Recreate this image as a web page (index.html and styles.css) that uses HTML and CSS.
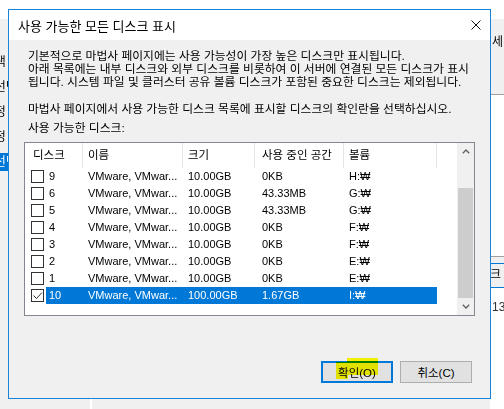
FILE: index.html
```html
<!DOCTYPE html>
<html lang="ko">
<head>
<meta charset="utf-8">
<title>사용 가능한 모든 디스크 표시</title>
<link rel="stylesheet" href="styles.css">
</head>
<body>
<div class="desktop">
  <div class="bg-window">
    <div class="bg-header"></div>
    <div class="bg-main">
      <nav class="bg-nav">
        <div class="nav-item">백업 구성 선택</div>
        <div class="nav-item">백업할 항목 선택</div>
        <div class="nav-item">백업 시간 지정</div>
        <div class="nav-item">대상 유형 지정</div>
        <div class="nav-item nav-item-active">대상 디스크 선택</div>
      </nav>
      <div class="bg-content">
        <div class="bg-side">
          <div class="bg-side-top">세 고</div>
          <div class="bg-side-list"></div>
          <div class="bg-side-row">크</div>
          <div class="bg-side-count">13</div>
        </div>
      </div>
    </div>
  </div>

  <div class="dialog">
    <div class="titlebar">
      <span class="title">사용 가능한 모든 디스크 표시</span>
      <svg class="close" width="10" height="10" viewBox="0 0 10 10"><path d="M0.5 0.5 L9.5 9.5 M9.5 0.5 L0.5 9.5" stroke="#111" stroke-width="1" fill="none"/></svg>
    </div>
    <div class="dlg-body">
      <p class="desc">기본적으로 마법사 페이지에는 사용 가능성이 가장 높은 디스크만 표시됩니다.<br>아래 목록에는 내부 디스크와 외부 디스크를 비롯하여 이 서버에 연결된 모든 디스크가 표시<br>됩니다. 시스템 파일 및 클러스터 공유 볼륨 디스크가 포함된 중요한 디스크는 제외됩니다.</p>
      <p class="instr">마법사 페이지에서 사용 가능한 디스크 목록에 표시할 디스크의 확인란을 선택하십시오.</p>
      <p class="label">사용 가능한 디스크:</p>
      <div class="listbox">
        <div class="list-main">
          <div class="lv-header">
            <div class="hcol h-disk">디스크</div>
            <div class="hcol h-name">이름</div>
            <div class="hcol h-size">크기</div>
            <div class="hcol h-used">사용 중인 공간</div>
            <div class="hcol h-vol">볼륨</div>
            <div class="h-fill"></div>
          </div>
          <div class="lv-row">
            <span class="cb"></span>
            <div class="sel"><span class="c-num">9</span><span class="c-name">VMware, VMwar...</span><span class="c-size">10.00GB</span><span class="c-used">0KB</span><span class="c-vol">H:₩</span></div>
          </div>
          <div class="lv-row">
            <span class="cb"></span>
            <div class="sel"><span class="c-num">6</span><span class="c-name">VMware, VMwar...</span><span class="c-size">10.00GB</span><span class="c-used">43.33MB</span><span class="c-vol">G:₩</span></div>
          </div>
          <div class="lv-row">
            <span class="cb"></span>
            <div class="sel"><span class="c-num">5</span><span class="c-name">VMware, VMwar...</span><span class="c-size">10.00GB</span><span class="c-used">43.33MB</span><span class="c-vol">G:₩</span></div>
          </div>
          <div class="lv-row">
            <span class="cb"></span>
            <div class="sel"><span class="c-num">4</span><span class="c-name">VMware, VMwar...</span><span class="c-size">10.00GB</span><span class="c-used">0KB</span><span class="c-vol">F:₩</span></div>
          </div>
          <div class="lv-row">
            <span class="cb"></span>
            <div class="sel"><span class="c-num">3</span><span class="c-name">VMware, VMwar...</span><span class="c-size">10.00GB</span><span class="c-used">0KB</span><span class="c-vol">F:₩</span></div>
          </div>
          <div class="lv-row">
            <span class="cb"></span>
            <div class="sel"><span class="c-num">2</span><span class="c-name">VMware, VMwar...</span><span class="c-size">10.00GB</span><span class="c-used">0KB</span><span class="c-vol">E:₩</span></div>
          </div>
          <div class="lv-row">
            <span class="cb"></span>
            <div class="sel"><span class="c-num">1</span><span class="c-name">VMware, VMwar...</span><span class="c-size">10.00GB</span><span class="c-used">0KB</span><span class="c-vol">E:₩</span></div>
          </div>
          <div class="lv-row lv-row-selected">
            <span class="cb cb-checked"><svg width="11" height="11" viewBox="0 0 11 11"><polyline points="1.5,5.5 4.5,8.5 10,2.5" fill="none" stroke="#333" stroke-width="1"/></svg></span>
            <div class="sel"><span class="c-num">10</span><span class="c-name">VMware, VMwar...</span><span class="c-size">100.00GB</span><span class="c-used">1.67GB</span><span class="c-vol">I:₩</span></div>
          </div>
        </div>
        <div class="scrollbar">
          <div class="sb-btn"><svg width="8" height="5" viewBox="0 0 8 5"><polyline points="0.8,4.3 4,1 7.2,4.3" fill="none" stroke="#606060" stroke-width="1.3"/></svg></div>
          <div class="sb-track"><div class="sb-thumb"></div></div>
          <div class="sb-btn"><svg width="8" height="5" viewBox="0 0 8 5"><polyline points="0.8,0.7 4,4 7.2,0.7" fill="none" stroke="#606060" stroke-width="1.3"/></svg></div>
        </div>
      </div>
      <div class="buttons">
        <button class="btn btn-default"><span class="btn-label">확인(O)</span><span class="hl hl-a"></span><span class="hl hl-b"></span></button>
        <button class="btn"><span class="btn-label">취소(C)</span></button>
      </div>
    </div>
  </div>
</div>
</body>
</html>
```
FILE: styles.css
```css
* { box-sizing: border-box; }
html, body { margin: 0; padding: 0; }
body {
  width: 504px;
  height: 409px;
  overflow: hidden;
  font-family: "Liberation Sans", "Noto Sans CJK KR", sans-serif;
  font-size: 11px;
  color: #000;
  background: #f0f0f0;
}
.desktop { position: relative; width: 504px; height: 409px; overflow: hidden; }

/* background wizard window */
.bg-window { display: flex; flex-direction: column; height: 100%; }
.bg-header { height: 19px; flex: none; background: #fff; }
.bg-main { flex: 1; display: flex; }
.bg-nav {
  width: 92px;
  flex: none;
  border-right: 2px solid #fff;
  padding-top: 34px;
  display: flex;
  flex-direction: column;
  gap: 7px;
  font-size: 12px;
  overflow: hidden;
}
.nav-item {
  margin-left: -67px;
  width: 120px;
  height: 18px;
  line-height: 18px;
  white-space: nowrap;
  flex: none;
}
.nav-item-active { background: #0078d7; color: #fff; }
.bg-content { flex: 1; display: flex; justify-content: flex-end; }
.bg-side { width: 14px; display: flex; flex-direction: column; font-size: 12px; white-space: nowrap; overflow: hidden; }
.bg-side-top { height: 75px; padding-top: 13px; padding-left: 2px; }
.bg-side-list { height: 163px; background: #fff; border-top: 1px solid #a0a0a0; border-bottom: 1px solid #a0a0a0; }
.bg-side-row {
  margin-top: 6px;
  height: 25px;
  line-height: 23px;
  border-top: 1px solid #0078d7;
  border-bottom: 1px solid #0078d7;
  background: #f0f0f0;
}
.bg-side-count { flex: 1; background: #fff; padding-top: 12px; padding-left: 2px; color: #333; }

/* dialog */
.dialog {
  position: absolute;
  left: 8px;
  top: 9px;
  width: 483px;
  height: 390px;
  border: 1px solid #1883d7;
  background: #f0f0f0;
  display: flex;
  flex-direction: column;
}
.titlebar {
  height: 30px;
  flex: none;
  background: #fff;
  display: flex;
  align-items: center;
  justify-content: space-between;
  padding: 0 9px 0 9px;
}
.title { font-size: 13px; white-space: nowrap; }
.close { display: block; }

.dlg-body { flex: 1; display: flex; flex-direction: column; padding: 10px 15px 15px 15px; }
.desc, .instr, .label { margin: 0; padding-left: 4px; line-height: 13px; white-space: nowrap; font-size: 11.8px; }
.instr { margin-top: 14px; }
.label { margin-top: 6px; }

.listbox {
  margin-top: 7px;
  width: 451px;
  height: 174px;
  border: 1px solid #828790;
  background: #fff;
  display: flex;
}
.list-main { width: 432px; display: flex; flex-direction: column; }
.lv-header { height: 25px; display: flex; align-items: stretch; font-size: 11.5px; }
.hcol {
  border-right: 1px solid #e5e5e5;
  line-height: 25px;
  padding-left: 5px;
  white-space: nowrap;
}
.h-disk { width: 58px; padding-left: 8px; }
.h-name { width: 100px; }
.h-size { width: 72px; }
.h-used { width: 89px; padding-left: 7px; }
.h-vol { width: 93px; }
.h-fill { flex: 1; }

.lv-row { height: 17px; display: flex; align-items: center; }
.cb {
  width: 13px;
  height: 13px;
  margin-left: 6px;
  margin-right: 2px;
  border: 1px solid #333;
  background: #fff;
  display: flex;
  align-items: center;
  justify-content: center;
}
.cb svg { display: block; }
.sel { width: 391px; height: 17px; display: flex; line-height: 17px; white-space: nowrap; }
.sel span { display: block; overflow: hidden; }
.c-num { width: 37px; padding-left: 3px; }
.c-name { width: 100px; padding-left: 5px; }
.c-size { width: 72px; padding-left: 5px; }
.c-used { width: 89px; padding-left: 7px; }
.c-vol { width: 93px; padding-left: 5px; }
.lv-row-selected .sel { background: #0078d7; color: #fff; }

.scrollbar { width: 17px; background: #f0f0f0; display: flex; flex-direction: column; }
.sb-btn { height: 17px; display: flex; align-items: center; justify-content: center; }
.sb-btn svg { display: block; }
.sb-track { flex: 1; display: flex; flex-direction: column; }
.sb-thumb { margin: 28px 1px 0 1px; height: 110px; background: #cdcdcd; }

.buttons { margin-top: 45px; display: flex; justify-content: flex-end; gap: 7px; padding-right: 3px; }
.btn {
  position: relative;
  width: 72px;
  height: 22px;
  padding: 0;
  margin: 0;
  border: 1px solid #adadad;
  background: #e1e1e1;
  font-family: "Liberation Sans", "Noto Sans CJK KR", sans-serif;
  font-size: 11.5px;
  color: #000;
  display: flex;
  align-items: center;
  justify-content: center;
}
.btn-default { border: 2px solid #0078d7; }
.btn-label { white-space: nowrap; }
.hl { position: absolute; background: #ffff00; mix-blend-mode: multiply; }
.hl-a { left: 13px; top: -1px; width: 12px; height: 17px; }
.hl-b { left: 24px; top: -5px; width: 31px; height: 17px; }
```
